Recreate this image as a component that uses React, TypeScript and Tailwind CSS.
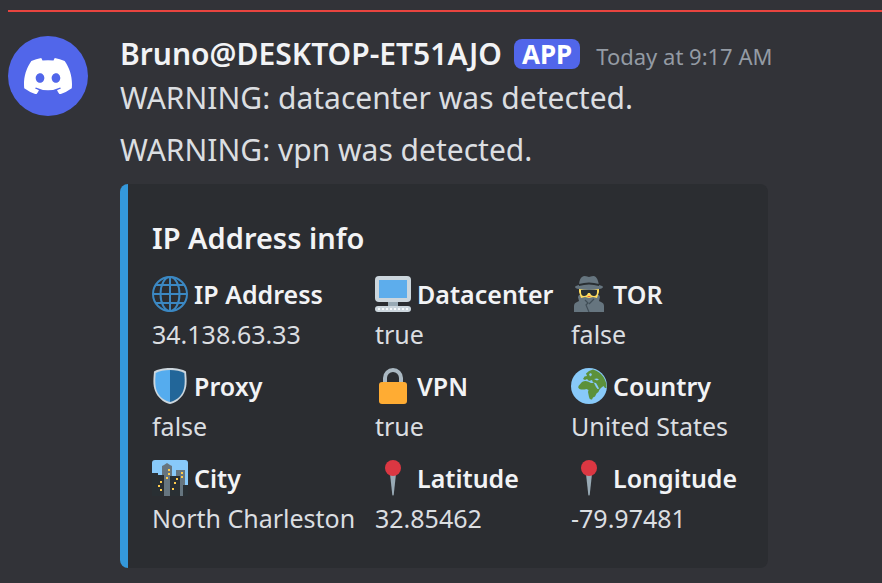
import type { ReactNode } from "react";

function DiscordMark() {
  return (
    <svg viewBox="0 0 127.14 96.36" className="w-12" fill="#fff" aria-hidden="true">
      <path d="M107.7,8.07A105.15,105.15,0,0,0,81.47,0a72.06,72.06,0,0,0-3.36,6.83A97.68,97.68,0,0,0,49,6.83,72.37,72.37,0,0,0,45.64,0,105.89,105.89,0,0,0,19.39,8.09C2.79,32.65-1.71,56.6.54,80.21h0A105.73,105.73,0,0,0,32.71,96.36,77.7,77.7,0,0,0,39.6,85.25a68.42,68.42,0,0,1-10.85-5.18c.91-.66,1.8-1.34,2.66-2a75.57,75.57,0,0,0,64.32,0c.87.71,1.76,1.39,2.66,2a68.68,68.68,0,0,1-10.87,5.19,77,77,0,0,0,6.89,11.1A105.25,105.25,0,0,0,126.6,80.22h0C129.24,52.84,122.09,29.11,107.7,8.07ZM42.45,65.69C36.18,65.69,31,60,31,53s5-12.74,11.43-12.74S54,46,53.89,53,48.84,65.69,42.45,65.69Zm42.24,0C78.41,65.69,73.25,60,73.25,53s5-12.74,11.44-12.74S96.23,46,96.12,53,91.08,65.69,84.69,65.69Z" />
    </svg>
  );
}

function Emoji({ children }: { children: ReactNode }) {
  return (
    <svg viewBox="0 0 36 36" className="size-9 shrink-0" aria-hidden="true">
      {children}
    </svg>
  );
}

const globe = (
  <g fill="none" stroke="#3b88c3" strokeWidth="2">
    <circle cx="18" cy="18" r="17" />
    <ellipse cx="18" cy="18" rx="9.5" ry="17" />
    <path d="M18 1v34M1 18h34M4 9h28M4 27h28" />
  </g>
);

const computer = (
  <>
    <path fill="#99aab5" d="M13 25h10v6H13z" />
    <rect width="36" height="26" rx="4" fill="#ccd6dd" />
    <path fill="#5dadec" d="M4 4h28v18H4z" />
    <rect y="30" width="36" height="6" rx="3" fill="#ccd6dd" />
    <path stroke="#f5f8fa" strokeWidth="2" strokeDasharray="2 2" d="M3 33h30" />
  </>
);

const sleuth = (
  <>
    <path fill="#66757f" d="M3 36v-6q0-3 3-4l2-1-1-4 1-2h20l1 2-1 4 2 1q3 1 3 4v6z" />
    <path fill="#ffdc5d" d="M8 12h20v4l-2 6-4-1-4 1-4-1-4 1-2-6z" />
    <path fill="#292f33" d="M10 14h16v2q0 4-3 4-3 0-4-3h-2q-1 3-4 3-3 0-3-4z" />
    <path fill="#df1f32" d="M16 20h4q-2 1.500-4 0z" />
    <path fill="none" stroke="#414e57" strokeWidth="1.2" d="m14 24 3 3-2 2 3 7M23 23l-5 5" />
    <ellipse cx="18" cy="11" rx="14" ry="3" fill="#66757f" />
    <path fill="#66757f" d="M8 10q0-9 5-10 2 0 5 1 3-1 5-1 4 1 5 10z" />
    <path fill="#292f33" d="M8 8q10-3 20 0v2q-10-3-20 0z" />
  </>
);

const shield = (
  <>
    <path fill="#ccd6dd" d="M34 3.500C31 1.500 24 0 18 0S5 1.500 2 3.500C1 14 1 19 4 25c3 6 9 10 14 11 5-1 11-5 14-11 3-6 3-11 2-21.500z" />
    <path fill="#55acee" d="M18 2C12.500 2 7 3.200 3.700 5 3 14 3 19 5.500 24.500 8 29.500 13 33 18 34z" />
    <path fill="#226699" d="M18 2c5.500 0 11 1.200 14.300 3 .7 9 .7 14-1.800 19.500C28 29.500 23 33 18 34z" />
  </>
);

const lock = (
  <>
    <path fill="none" stroke="#aab8c2" strokeWidth="4" d="M10 16v-6a8 8 0 0 1 16 0v6" />
    <rect x="4" y="14" width="28" height="22" rx="3" fill="#ffac33" />
  </>
);

const earth = (
  <>
    <circle cx="18" cy="18" r="18" fill="#88c9f9" />
    <path
      fill="#5c913b"
      d="M11 14q3-1.500 6-.5l3 1.500 3 0 2 4 1.500 2 2.500-.5q-1 3.500-3.500 5l-1.500 3-2 1-1 2q-2.500 .5-3-2.500l-1-5 .5-2-2-1q-4 1-7 0-2-1-1-3z"
    />
    <path
      fill="#5c913b"
      d="M12 11l1.500-2.500 2.500-.5-1-2.500 3-2.500 4-1.500q7 2 10.500 7.500 3.500 6 3 11l-1.500 0-1.500-2-2 1.500-2 2-2-4-1.500-2.500-3-.5-1-2.500-3 1-2-2-2 1z"
    />
    <path fill="#88c9f9" d="M18 6l2-1 1 2-2 1.500zM23 11l3-.5 2 1-2 1z" />
  </>
);

const city = (
  <>
    <path fill="#88c9f9" d="M3 0h30q3 0 3 3v22H0V3q0-3 3-3z" />
    <path fill="#66757f" d="M10 36V6l2-1 3-2 3 2 2 1v30zM24 10h9v26h-9z" />
    <path fill="#292f33" d="M0 13h6v2h6v21H0zM18 16h10v20H18zM31 25h5v11h-5z" />
    <path
      fill="#ffcc4d"
      d="M8 21h2v2H8zM6 25h2v2H6zM8 29h2v2H8zM16 9h2v2h-2zM16 13h2v2h-2zM14 17h2v2h-2zM24 18h2v2h-2zM22 22h2v2h-2zM20 28h2v2h-2zM29 12h2v2h-2zM29 16h2v2h-2z"
    />
  </>
);

const pin = (
  <>
    <path fill="#99aab5" d="M15 14h6l-2.300 21q-.7 1-1.400 0z" />
    <circle cx="18" cy="8" r="8" fill="#db3742" />
  </>
);

const fields = [
  { name: "IP Address", value: "34.138.63.33", icon: globe },
  { name: "Datacenter", value: "true", icon: computer },
  { name: "TOR", value: "false", icon: sleuth },
  { name: "Proxy", value: "false", icon: shield },
  { name: "VPN", value: "true", icon: lock },
  { name: "Country", value: "United States", icon: earth },
  { name: "City", value: "North Charleston", icon: city },
  { name: "Latitude", value: "32.85462", icon: pin },
  { name: "Longitude", value: "-79.97481", icon: pin },
];

export default function App() {
  return (
    <main className="min-h-screen bg-[#323338] pt-[10px] pb-3 pl-2 font-['Noto_Sans','Open_Sans',sans-serif] text-[#dbdee1]">
      <hr className="border-t-2 border-[#e8443f]" />
      <article className="mt-6 flex items-start gap-8">
        <div className="flex size-20 shrink-0 items-center justify-center rounded-full bg-[#5166ea]">
          <DiscordMark />
        </div>
        <div className="min-w-0 flex-1">
          <header className="flex h-9 items-center whitespace-nowrap">
            <h1 className="text-[30px] leading-9 font-semibold text-[#f2f3f5]">Bruno@DESKTOP-ET51AJO</h1>
            <span className="ml-3 rounded-lg bg-[#5166ea] px-2 text-[26px] leading-[30px] font-bold text-white">APP</span>
            <time className="ml-4 pt-1 text-[22px] leading-9 text-[#949ba4]">Today at 9:17 AM</time>
          </header>
          <div className="flex flex-col gap-2 pt-1 text-[30px] leading-[44px]">
            <p>WARNING: datacenter was detected.</p>
            <p>WARNING: vpn was detected.</p>
          </div>
          <section className="mt-3 w-fit rounded-lg border-l-8 border-[#3498db] bg-[#2b2d31] pt-8 pr-8 pb-8 pl-6">
            <h2 className="text-[29px] leading-[44px] font-semibold text-[#f2f3f5]">IP Address info</h2>
            <dl className="mt-4 grid grid-cols-[207px_180px_165px] gap-x-4 gap-y-4 whitespace-nowrap">
              {fields.map((field) => (
                <div key={field.name}>
                  <dt className="flex h-9 items-center gap-[6px] text-[25px] leading-9 font-semibold text-[#f2f3f5]">
                    <Emoji>{field.icon}</Emoji>
                    {field.name}
                  </dt>
                  <dd className="pt-1 text-[25px] leading-9">{field.value}</dd>
                </div>
              ))}
            </dl>
          </section>
        </div>
      </article>
    </main>
  );
}
